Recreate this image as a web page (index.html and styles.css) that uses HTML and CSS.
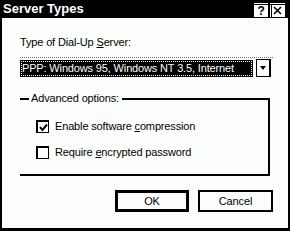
FILE: index.html
```html
<!DOCTYPE html>
<html>
<head>
<meta charset="utf-8">
<link rel="stylesheet" href="styles.css">
</head>
<body>
<div class="window">
  <div class="titlebar">
    <span class="title">Server Types</span>
    <div class="tb-buttons">
      <span class="tb-btn help">?</span>
      <span class="tb-btn close">
        <svg width="15" height="14" viewBox="0 0 15 14"><rect x="0" y="0" width="15" height="14" fill="#fff"/><rect x="0" y="1" width="15" height="1" fill="#000"/><rect x="1" y="2" width="1" height="12" fill="#000"/><path d="M4 4 L11 11 M11 4 L4 11" stroke="#000" stroke-width="1.6"/></svg>
      </span>
    </div>
  </div>
  <div class="content">
    <div class="label">Type of Dial-Up <u>S</u>erver:</div>
    <div class="select">
      <span class="hl">PPP: Windows 95, Windows NT 3.5, Internet</span>
      <span class="drop"><span class="arrow"></span></span>
    </div>
    <fieldset class="group">
      <legend>Advanced options:</legend>
      <div class="opts">
        <div class="opt"><span class="cb checked"><svg width="9" height="9" viewBox="0 0 9 9"><path d="M1 4 L3.5 7 L8 1.5" fill="none" stroke="#000" stroke-width="2"/></svg></span><span>Enable software <u>c</u>ompression</span></div>
        <div class="opt"><span class="cb"></span><span>Require <u>e</u>ncrypted password</span></div>
      </div>
    </fieldset>
    <div class="buttons">
      <span class="btn default">OK</span>
      <span class="btn">Cancel</span>
    </div>
  </div>
</div>
</body>
</html>
```

FILE: styles.css
```css
html, body {
  margin: 0;
  padding: 0;
  background: #fcfefc;
}
.window {
  width: 290px;
  height: 231px;
  box-sizing: border-box;
  border-left: 2px solid #000;
  border-right: 2px solid #000;
  border-bottom: 3px solid #000;
  background: #fcfefc;
  display: flex;
  flex-direction: column;
  font-family: "Liberation Sans", Arial, sans-serif;
  font-size: 11px;
  letter-spacing: -0.15px;
  color: #000;
}
.titlebar {
  height: 18px;
  background: #000;
  display: flex;
  align-items: center;
  justify-content: space-between;
  padding-left: 1px;
  padding-right: 3px;
}
.title {
  color: #fff;
  font-weight: bold;
  font-size: 13px;
  line-height: 18px;
  letter-spacing: 0;
}
.tb-buttons {
  display: flex;
  gap: 2px;
  margin-top: 1px;
}
.tb-btn {
  width: 15px;
  height: 14px;
  display: flex;
  align-items: center;
  justify-content: center;
}
.help {
  background: linear-gradient(#fff 0 1px, #000 1px 2px, #fff 2px);
  border-left: 1px solid #000;
  box-sizing: border-box;
  font-weight: bold;
  font-size: 12px;
  line-height: 14px;
  padding-top: 2px;
}
.content {
  padding: 18px 15px 0 18px;
  display: flex;
  flex-direction: column;
}
.label {
  line-height: 13px;
}
.select {
  margin-top: 8px;
  height: 21px;
  box-sizing: border-box;
  border-top: 1px dotted #777;
  padding-top: 1px;
  padding-right: 2px;
  display: flex;
  align-items: flex-start;
  gap: 3px;
}
.hl {
  flex: 1;
  margin-top: 1px;
  height: 17px;
  background: #000;
  color: #fff;
  line-height: 17px;
  padding-left: 2px;
  outline: 1px dotted #fff;
  outline-offset: -2px;
  white-space: nowrap;
  overflow: hidden;
}
.drop {
  width: 15px;
  height: 18px;
  box-sizing: border-box;
  background: #fff;
  border: 1px solid #000;
  border-right-width: 2px;
  display: flex;
  align-items: center;
  justify-content: center;
}
.arrow {
  width: 0;
  height: 0;
  border-left: 3.5px solid transparent;
  border-right: 3.5px solid transparent;
  border-top: 4px solid #000;
}
.group {
  margin: 14px 3px 0 0;
  padding: 0;
  border: 2px solid #000;
  border-left: none;
  min-width: 0;
}
.group legend {
  margin-left: 9px;
  padding: 0 3px 0 2px;
  line-height: 13px;
}
.opts {
  padding: 15px 0 15px 16px;
  display: flex;
  flex-direction: column;
  gap: 13px;
}
.opt {
  display: flex;
  align-items: center;
  gap: 6px;
  height: 13px;
  line-height: 13px;
}
.cb {
  width: 13px;
  height: 13px;
  box-sizing: border-box;
  border: 1px solid #000;
  border-top-width: 2px;
  border-left-width: 2px;
  background: #fff;
  display: flex;
  align-items: center;
  justify-content: center;
}
.buttons {
  margin-top: 14px;
  display: flex;
  justify-content: flex-end;
  gap: 9px;
}
.btn {
  width: 75px;
  height: 22px;
  box-sizing: border-box;
  border: 2px solid #000;
  display: flex;
  align-items: center;
  justify-content: center;
}
.btn.default {
  width: 74px;
  border-width: 3px;
}
```
